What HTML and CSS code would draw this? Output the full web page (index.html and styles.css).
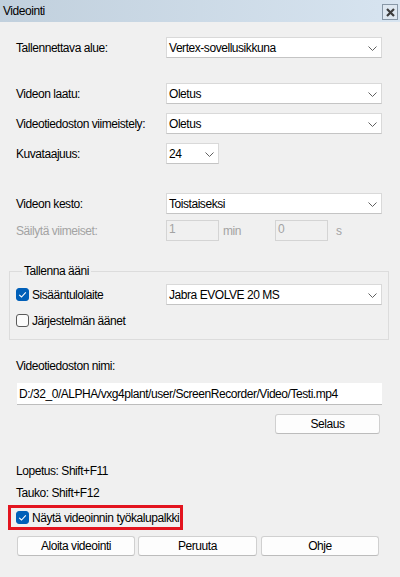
FILE: index.html
```html
<!DOCTYPE html>
<html lang="fi">
<head>
<meta charset="utf-8">
<title>Videointi</title>
<link rel="stylesheet" href="styles.css">
</head>
<body>
<div class="dialog">
  <div class="titlebar">
    <span class="title">Videointi</span>
    <span class="close"><svg width="9" height="9" viewBox="0 0 9 9"><path d="M1 1 L8 8 M8 1 L1 8" stroke="#3c3c3c" stroke-width="2.2" fill="none"/></svg></span>
  </div>
  <div class="content">
    <div class="row r1">
      <span class="lbl">Tallennettava alue:</span>
      <div class="combo wide"><span>Vertex-sovellusikkuna</span><svg class="chev" width="9" height="5" viewBox="0 0 9 5"><path d="M0.5 0.5 L4.5 4.5 L8.5 0.5" stroke="#606060" stroke-width="1" fill="none"/></svg></div>
    </div>
    <div class="row r2">
      <span class="lbl">Videon laatu:</span>
      <div class="combo wide"><span>Oletus</span><svg class="chev" width="9" height="5" viewBox="0 0 9 5"><path d="M0.5 0.5 L4.5 4.5 L8.5 0.5" stroke="#606060" stroke-width="1" fill="none"/></svg></div>
    </div>
    <div class="row r3">
      <span class="lbl">Videotiedoston viimeistely:</span>
      <div class="combo wide"><span>Oletus</span><svg class="chev" width="9" height="5" viewBox="0 0 9 5"><path d="M0.5 0.5 L4.5 4.5 L8.5 0.5" stroke="#606060" stroke-width="1" fill="none"/></svg></div>
    </div>
    <div class="row r4">
      <span class="lbl">Kuvataajuus:</span>
      <div class="combo small"><span>24</span><svg class="chev" width="9" height="5" viewBox="0 0 9 5"><path d="M0.5 0.5 L4.5 4.5 L8.5 0.5" stroke="#606060" stroke-width="1" fill="none"/></svg></div>
    </div>
    <div class="row r5">
      <span class="lbl">Videon kesto:</span>
      <div class="combo wide"><span>Toistaiseksi</span><svg class="chev" width="9" height="5" viewBox="0 0 9 5"><path d="M0.5 0.5 L4.5 4.5 L8.5 0.5" stroke="#606060" stroke-width="1" fill="none"/></svg></div>
    </div>
    <div class="row r6 disabled">
      <span class="lbl">Säilytä viimeiset:</span>
      <div class="dbox">1</div><span class="unit u1">min</span>
      <div class="dbox">0</div><span class="unit u2">s</span>
    </div>

    <fieldset class="group">
      <legend>Tallenna ääni</legend>
      <div class="row g1">
        <span class="lbl chk"><span class="box checked"><svg width="13" height="13" viewBox="0 0 13 13"><path d="M3.2 6.8 L5.5 9 L9.8 4.3" stroke="#fff" stroke-width="1.1" fill="none"/></svg></span>Sisääntulolaite</span>
        <div class="combo wide"><span>Jabra EVOLVE 20 MS</span><svg class="chev" width="9" height="5" viewBox="0 0 9 5"><path d="M0.5 0.5 L4.5 4.5 L8.5 0.5" stroke="#606060" stroke-width="1" fill="none"/></svg></div>
      </div>
      <div class="row g2">
        <span class="lbl chk"><span class="box"></span>Järjestelmän äänet</span>
      </div>
    </fieldset>

    <div class="line fname">Videotiedoston nimi:</div>
    <div class="textbox">D:/32_0/ALPHA/vxg4plant/user/ScreenRecorder/Video/Testi.mp4</div>
    <div class="browse-row"><button class="btn browse">Selaus</button></div>

    <div class="line stop">Lopetus: Shift+F11</div>
    <div class="line pause">Tauko: Shift+F12</div>
    <div class="highlight">
      <span class="chk"><span class="box checked"><svg width="13" height="13" viewBox="0 0 13 13"><path d="M3.2 6.8 L5.5 9 L9.8 4.3" stroke="#fff" stroke-width="1.1" fill="none"/></svg></span>Näytä videoinnin työkalupalkki</span>
    </div>
    <div class="buttons">
      <button class="btn">Aloita videointi</button>
      <button class="btn">Peruuta</button>
      <button class="btn">Ohje</button>
    </div>
  </div>
</div>
</body>
</html>
```

FILE: styles.css
```css
* { box-sizing: border-box; }
html, body { margin: 0; padding: 0; }
body {
  width: 400px;
  height: 577px;
  background: #f0f0f0;
  font-family: "Liberation Sans", Arial, sans-serif;
  font-size: 12px;
  letter-spacing: -0.45px;
  color: #000;
  overflow: hidden;
}
.dialog { width: 400px; height: 577px; }
.titlebar {
  height: 22px;
  background: linear-gradient(to right, #c1d0dd, #d7e4f0);
  display: flex;
  align-items: center;
  justify-content: space-between;
  padding: 0 2px 0 3px;
}
.title { font-size: 12px; color: #000; }
.close {
  width: 16px;
  height: 16px;
  border: 1px solid #8797a6;
  background: #dde7f0;
  display: flex;
  align-items: center;
  justify-content: center;
  margin-top: 2px;
}
.content { padding: 0 18px 0 16px; }
.row {
  display: flex;
  align-items: center;
  height: 21px;
}
.lbl { width: 150px; flex: none; }
.r1 { margin-top: 15px; }
.r2 { margin-top: 25px; }
.r3 { margin-top: 9px; }
.r4 { margin-top: 9px; }
.r5 { margin-top: 29px; }
.r6 { margin-top: 6px; }
.combo {
  height: 21px;
  background: #fff;
  border: 1px solid #d9d9d9;
  border-bottom-color: #c4c4c4;
  display: flex;
  align-items: center;
  justify-content: space-between;
  padding: 0 4px 0 2px;
}
.combo.wide { width: 216px; }
.combo.small { width: 53px; }
.chev { flex: none; margin-top: 1px; }
.disabled { color: #a3a3a3; }
.dbox {
  width: 53px;
  height: 21px;
  border: 1px solid #d4d4d4;
  background: #f0f0f0;
  padding: 0 0 0 2px;
  line-height: 17px;
  color: #a3a3a3;
}
.unit { display: inline-block; }
.u1 { margin-left: 4px; width: 52px; }
.u2 { margin-left: 8px; }
.group {
  margin: 23px -7px 0 -7px;
  border: 1px solid #dcdcdc;
  padding: 6px 6px 8px 6px;
  min-width: 0;
}
.group legend {
  padding: 0 2px;
  margin-left: 6px;
  line-height: 14px;
}
.g2 { margin-top: 5px; }
.chk { display: flex; align-items: center; }
.box {
  width: 13px;
  height: 13px;
  border: 1px solid #5a5a5a;
  border-radius: 3px;
  background: #fbfbfb;
  margin-right: 3px;
  flex: none;
  display: flex;
}
.box.checked {
  background: #005fb8;
  border-color: #005fb8;
}
.box svg { margin: -1px; }
.line { line-height: 14px; }
.fname { margin-top: 19px; }
.textbox {
  margin: 10px 0 0 1px;
  height: 22px;
  background: #fff;
  border-bottom: 1px solid #bdbdbd;
  padding-left: 2px;
  display: flex;
  align-items: center;
}
.browse-row { display: flex; justify-content: flex-end; margin-top: 9px; padding-right: 2px; }
.btn {
  font-family: inherit;
  font-size: 12px;
  letter-spacing: inherit;
  color: #000;
  background: #fdfdfd;
  border: 1px solid #d0d0d0;
  border-bottom-color: #bcbcbc;
  border-radius: 3px;
  height: 20px;
  padding: 0;
}
.browse { width: 105px; }
.stop { margin-top: 30px; }
.pause { margin-top: 8px; }
.highlight {
  margin: 5px 0 0 -8px;
  width: 175px;
  height: 25px;
  border: 3px solid #e3151f;
  padding-left: 5px;
  display: flex;
  align-items: center;
}
.buttons {
  margin: 6px 2px 0 1px;
  display: grid;
  grid-template-columns: 118px 119px 119px;
  column-gap: 3px;
}
.buttons .btn:last-child { margin-left: 1px; }
```
